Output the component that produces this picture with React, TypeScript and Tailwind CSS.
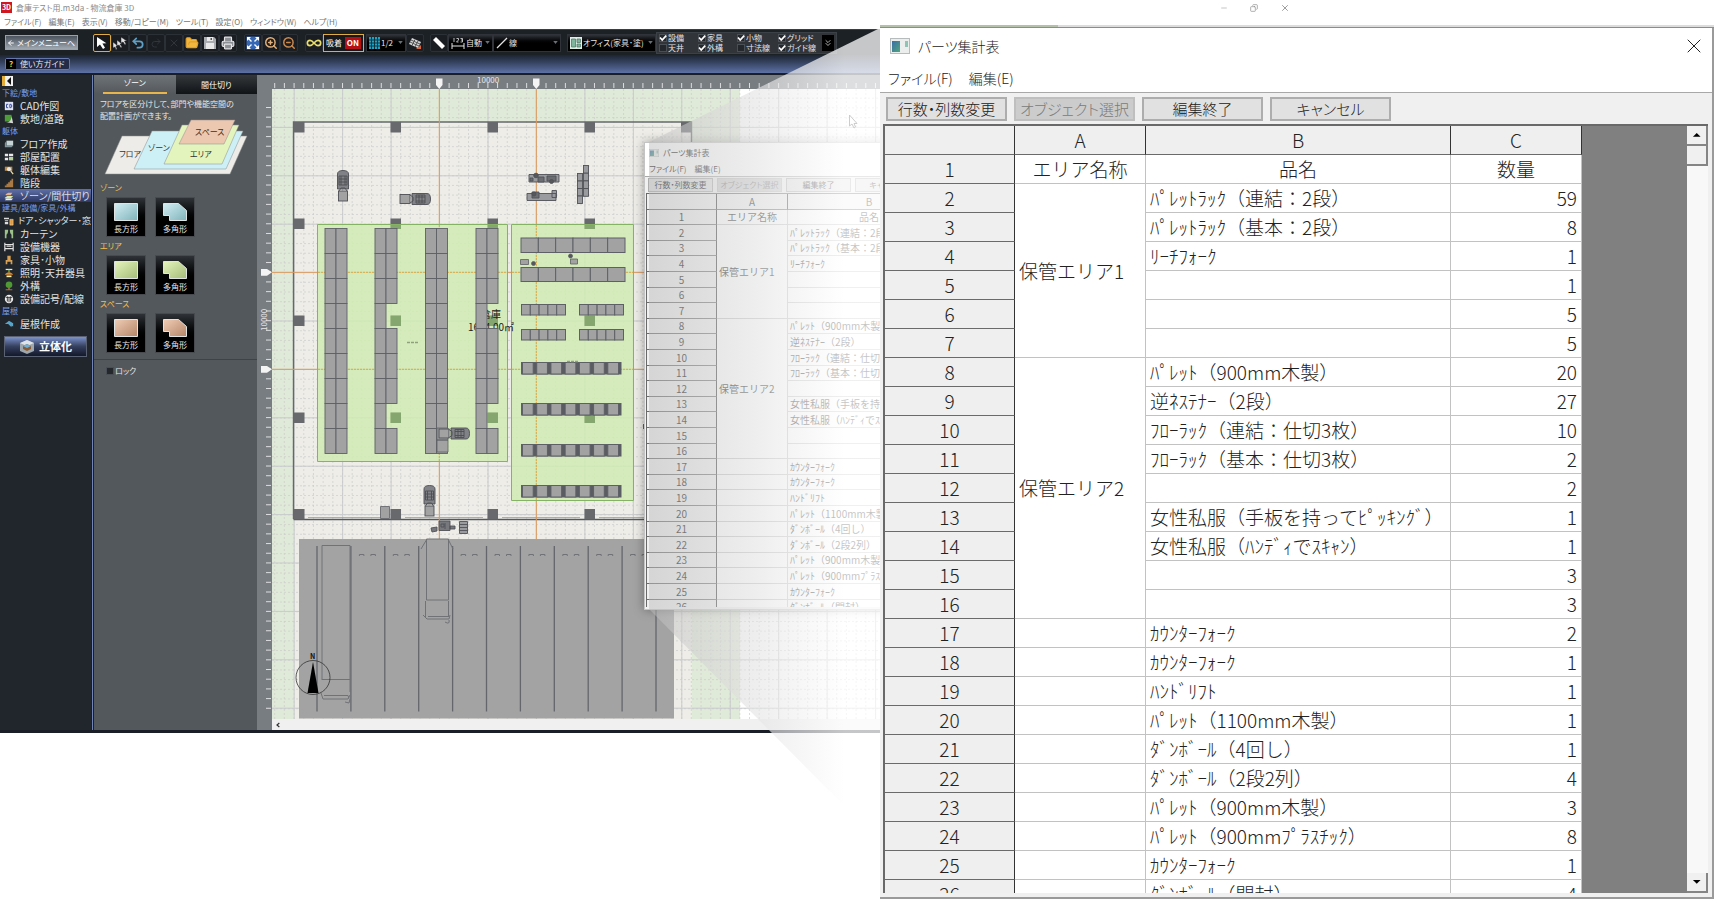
import React from "react";
import {
  ArrowLeft,
  ChevronsDown,
  Copy,
  FolderOpen,
  Infinity as InfinityIcon,
  Minus,
  Printer,
  Redo2,
  Undo2,
  X,
  ZoomIn,
  ZoomOut,
} from "lucide-react";

/* ---------- parts sheet data ---------- */

type Row = { name: string; qty: number };

const ROWS: Row[] = [
  { name: "ﾊﾟﾚｯﾄﾗｯｸ（連結：2段）", qty: 59 },
  { name: "ﾊﾟﾚｯﾄﾗｯｸ（基本：2段）", qty: 8 },
  { name: "ﾘｰﾁﾌｫｰｸ", qty: 1 },
  { name: "", qty: 1 },
  { name: "", qty: 5 },
  { name: "", qty: 5 },
  { name: "ﾊﾟﾚｯﾄ（900mm木製）", qty: 20 },
  { name: "逆ﾈｽﾃﾅｰ（2段）", qty: 27 },
  { name: "ﾌﾛｰﾗｯｸ（連結：仕切3枚）", qty: 10 },
  { name: "ﾌﾛｰﾗｯｸ（基本：仕切3枚）", qty: 2 },
  { name: "", qty: 2 },
  { name: "女性私服（手板を持ってﾋﾟｯｷﾝｸﾞ）", qty: 1 },
  { name: "女性私服（ﾊﾝﾃﾞｨでｽｷｬﾝ）", qty: 1 },
  { name: "", qty: 3 },
  { name: "", qty: 3 },
  { name: "ｶｳﾝﾀｰﾌｫｰｸ", qty: 2 },
  { name: "ｶｳﾝﾀｰﾌｫｰｸ", qty: 1 },
  { name: "ﾊﾝﾄﾞﾘﾌﾄ", qty: 1 },
  { name: "ﾊﾟﾚｯﾄ（1100mm木製）", qty: 1 },
  { name: "ﾀﾞﾝﾎﾞｰﾙ（4回し）", qty: 1 },
  { name: "ﾀﾞﾝﾎﾞｰﾙ（2段2列）", qty: 4 },
  { name: "ﾊﾟﾚｯﾄ（900mm木製）", qty: 3 },
  { name: "ﾊﾟﾚｯﾄ（900mmﾌﾟﾗｽﾁｯｸ）", qty: 8 },
  { name: "ｶｳﾝﾀｰﾌｫｰｸ", qty: 1 },
  { name: "ﾀﾞﾝﾎﾞｰﾙ（開封）", qty: 4 },
];

const AREAS: Record<number, { label: string; span: number }> = {
  0: { label: "保管エリア1", span: 6 },
  6: { label: "保管エリア2", span: 9 },
};

const LARGE = {
  root: "font-light text-[#222]",
  titleBar: "h-9 gap-2 pl-2.5 pr-1.5 text-[14px]",
  icon: "h-4 w-5",
  close: "size-6",
  menuBar: "h-7 gap-4 px-2 text-[14px]",
  toolBar: "h-8 gap-[7px] px-1.5 border-t border-[#a8a8a8]",
  button: "h-6 w-[121px] text-[15px] leading-[20px] border-2",
  frame: "ml-[3px] mr-1 mb-1 border-t-2 border-l-2",
  table: "w-[697px] text-[19px] leading-[24px]",
  rows: ["h-[29px]"],
  cols: ["w-[130px]", "w-[131px]", "w-[305px]", "w-[131px]"],
  pad: "px-1",
  scroll: "w-[21px]",
  scrollBtn: "h-5",
};

const SMALL: typeof LARGE = {
  root: "font-normal text-[#111]",
  titleBar: "h-[19px] gap-1 pl-1 pr-2 text-[8px]",
  icon: "h-2 w-2.5",
  close: "size-3",
  menuBar: "h-3.5 gap-2 px-1 text-[8px]",
  toolBar: "h-[17px] gap-1 px-[3px] border-t border-[#a8a8a8]",
  button: "h-3.5 w-[65px] text-[8px] leading-[12px] border",
  frame: "ml-px mr-0.5 mb-0.5 border-t border-l",
  table: "w-[375px] text-[10px] leading-[14px]",
  rows: ["h-[16px]", "h-[15px]", "h-[16px]", "h-[15px]", "h-[16px]"],
  cols: ["w-[70px]", "w-[71px]", "w-[163px]", "w-[71px]"],
  pad: "px-0.5",
  scroll: "w-[11px]",
  scrollBtn: "h-[11px]",
};

const HEAD_CELL =
  "border-r border-b border-r-[#333] border-b-[#6a6a6a] bg-[#efefef] p-0 text-center [font-weight:inherit]";
const DATA_CELL = "border-r border-b border-[#c2c2c2] bg-white py-0";

function PartsSheet({ size }: { size: typeof LARGE }) {
  const rowHeight = (i: number) => size.rows[i % size.rows.length];
  return (
    <div className={`flex h-full flex-col bg-white ${size.root}`}>
      <div className={`flex shrink-0 items-center [font-feature-settings:'palt'] ${size.titleBar}`}>
        <svg viewBox="0 0 20 16" className={size.icon} aria-hidden="true">
          <defs>
            <linearGradient id="sheetIcon" x1="0" y1="0" x2="1" y2="1">
              <stop offset="0" stopColor="#3a6ea8" />
              <stop offset="1" stopColor="#4fa57c" />
            </linearGradient>
          </defs>
          <rect x="0.5" y="0.5" width="19" height="15" fill="#eceeee" stroke="#b6bcbc" />
          <rect x="2" y="3" width="8" height="11" fill="url(#sheetIcon)" />
          <rect x="15" y="3" width="3" height="6" fill="#8fc4b4" />
        </svg>
        <span className="flex-1">パーツ集計表</span>
        <button type="button" aria-label="閉じる">
          <X className={size.close} strokeWidth={1} />
        </button>
      </div>
      <div className={`flex shrink-0 items-center [font-feature-settings:'palt'] ${size.menuBar}`}>
        <button type="button">ファイル(F)</button>
        <button type="button">編集(E)</button>
      </div>
      <div className={`flex shrink-0 items-center bg-[#f0f0f0] ${size.toolBar}`}>
        {["行数・列数変更", "オブジェクト選択", "編集終了", "キャンセル"].map((label, i) => (
          <button
            key={label}
            type="button"
            disabled={i === 1}
            className={`flex shrink-0 items-center justify-center whitespace-nowrap border-[#adadad] bg-[#e1e1e1] [font-feature-settings:'palt'] disabled:border-[#bfbfbf] disabled:bg-[#cccccc] disabled:text-[#7a7a7a] ${size.button}`}
          >
            {label}
          </button>
        ))}
      </div>
      <div className="flex min-h-0 flex-1 bg-[#f0f0f0]">
        <div className={`flex min-w-0 flex-1 overflow-hidden border-[#696969] ${size.frame}`}>
          <div className="min-w-0 flex-1 overflow-hidden bg-[#808080]">
            <table className={`table-fixed border-separate border-spacing-0 ${size.table}`}>
              <thead>
                <tr className={rowHeight(0)}>
                  {["", "A", "B", "C"].map((c, i) => (
                    <th key={i} scope="col" className={`${HEAD_CELL} ${size.cols[i]}`}>
                      {c}
                    </th>
                  ))}
                </tr>
              </thead>
              <tbody>
                <tr className={rowHeight(1)}>
                  <th scope="row" className={HEAD_CELL}>1</th>
                  <td className={`${DATA_CELL} text-center ${size.pad}`}>エリア名称</td>
                  <td className={`${DATA_CELL} text-center ${size.pad}`}>品名</td>
                  <td className={`${DATA_CELL} text-center ${size.pad}`}>数量</td>
                </tr>
                {ROWS.map((row, i) => {
                  const area = AREAS[i];
                  const covered = i < 15;
                  return (
                    <tr key={i} className={rowHeight(i + 2)}>
                      <th scope="row" className={HEAD_CELL}>{i + 2}</th>
                      {area && (
                        <td rowSpan={area.span} className={`${DATA_CELL} align-middle whitespace-nowrap ${size.pad}`}>
                          {area.label}
                        </td>
                      )}
                      {!covered && <td className={DATA_CELL} />}
                      <td className={`${DATA_CELL} whitespace-nowrap ${size.pad}`}>{row.name}</td>
                      <td className={`${DATA_CELL} text-right ${size.pad}`}>{row.qty}</td>
                    </tr>
                  );
                })}
              </tbody>
            </table>
          </div>
          <div className={`flex shrink-0 flex-col bg-[#f8f8f8] ${size.scroll}`}>
            <ScrollButton size={size.scrollBtn} label="上へ" d="M1 6 5 2l4 4z" />
            <div className={`border-r-2 border-b-2 border-[#858585] bg-[#f0f0f0] ${size.scrollBtn}`} />
            <div className="flex-1" />
            <ScrollButton size={size.scrollBtn} label="下へ" d="M1 2h8L5 6z" />
          </div>
        </div>
      </div>
    </div>
  );
}

function ScrollButton({ size, label, d }: { size: string; label: string; d: string }) {
  return (
    <button
      type="button"
      aria-label={label}
      className={`flex items-center justify-center border-r-2 border-b-2 border-[#858585] bg-[#f0f0f0] ${size}`}
    >
      <svg viewBox="0 0 10 8" className="w-1/2" aria-hidden="true">
        <path d={d} fill="#000" />
      </svg>
    </button>
  );
}

/* ---------- toolbar ---------- */

function Tool({ label, active, children }: { label: string; active?: boolean; children: React.ReactNode }) {
  return (
    <button
      type="button"
      aria-label={label}
      className={
        active
          ? "flex h-[18px] w-[18px] shrink-0 items-center justify-center rounded-xs border border-[#e0ac45] bg-[#17191d]"
          : "flex h-[18px] w-[18px] shrink-0 items-center justify-center rounded-xs border border-[#2b3037] bg-[#1a1d22]"
      }
    >
      {children}
    </button>
  );
}

function Picker({ label, value, width, children }: { label: string; value: string; width: string; children?: React.ReactNode }) {
  return (
    <label
      className={`flex h-[18px] shrink-0 items-center gap-px border border-[#30343a] bg-linear-to-b from-[#30343a] to-black to-60% px-0.5 ${width}`}
    >
      {children}
      <select
        aria-label={label}
        className="min-w-0 flex-1 appearance-none bg-transparent text-[8px] leading-[12px] text-[#e6e6e6] [font-feature-settings:'palt']"
      >
        <option>{value}</option>
      </select>
      <svg viewBox="0 0 6 4" className="h-[3px] w-[5px] shrink-0" aria-hidden="true">
        <path d="M0 0h6L3 4z" fill="#6a7077" />
      </svg>
    </label>
  );
}

function Tick({ label, checked }: { label: string; checked: boolean }) {
  return (
    <label className="flex items-center gap-px text-[8px] leading-[9px] whitespace-nowrap text-[#e4e4e4]">
      <span className="grid shrink-0">
        <input
          type="checkbox"
          defaultChecked={checked}
          className="peer col-start-1 row-start-1 size-2 appearance-none border border-[#4a4f56] bg-[#24282d]"
        />
        <svg
          viewBox="0 0 8 8"
          className="pointer-events-none invisible col-start-1 row-start-1 size-2 peer-checked:visible"
          aria-hidden="true"
        >
          <path d="M1 3.5 3.2 6 7.2 1.6" fill="none" stroke="#fff" strokeWidth="1.7" />
        </svg>
      </span>
      {label}
    </label>
  );
}

const TICKS: [string, boolean][] = [
  ["設備", true],
  ["家具", true],
  ["小物", true],
  ["グリッド", true],
  ["天井", false],
  ["外構", true],
  ["寸法線", false],
  ["ガイド線", true],
];

function Toolbar() {
  return (
    <div className="flex h-[26px] items-center border-t border-[#3a3f45] bg-[#1c2126] pl-[5px] [font-feature-settings:'palt']">
      <button
        type="button"
        className="mr-[15px] flex h-[15px] w-[73px] shrink-0 items-center gap-0.5 border border-[#9aa1a8] bg-linear-to-b from-[#4c555f] to-[#9fa7b0] px-px text-[8px] whitespace-nowrap text-white"
      >
        <ArrowLeft className="size-2 shrink-0" strokeWidth={3} />
        メインメニューへ
      </button>
      <Tool label="選択" active>
        <svg viewBox="0 0 16 16" className="size-4" aria-hidden="true">
          <path d="M3 2v10l3-2.4L9 14l2-1.2-2.6-4.2 4-.4z" fill="#fff" />
        </svg>
      </Tool>
      <Tool label="複数選択">
        <svg viewBox="0 0 16 16" className="size-4" aria-hidden="true">
          <path d="M9 2v6l2-1 2 3 1-1-1.500-3H15zM5 5v6l2-1 2 3 1-1-2-3h2zM1 7v6l2-1 1 3 1-1-1-3h2z" fill="#e4e4e4" stroke="#1a1d22" strokeWidth=".5" />
        </svg>
      </Tool>
      <Tool label="元に戻す"><Undo2 className="size-3.5 text-[#5f9fc4]" strokeWidth={3} /></Tool>
      <Tool label="やり直す"><Redo2 className="size-3 text-[#30363c]" /></Tool>
      <Tool label="削除"><X className="size-3 text-[#30363c]" /></Tool>
      <Tool label="開く"><FolderOpen className="size-3.5 fill-[#f0b63e] text-[#e0a02c]" /></Tool>
      <Tool label="保存">
        <svg viewBox="0 0 12 12" className="size-3" aria-hidden="true">
          <path d="M0 0h10l2 2v10H0z" fill="#a9adb1" />
          <path d="M3 0h6v4H3zM2 6h8v6H2z" fill="#e9e9e9" />
          <path d="M6.500 1h1.500v2H6.500z" fill="#555" />
        </svg>
      </Tool>
      <Tool label="印刷"><Printer className="size-3.5 fill-[#8d9195] text-[#e6e6e6]" /></Tool>
      <span className="w-[7px] shrink-0" />
      <Tool label="全体表示">
        <svg viewBox="0 0 14 14" className="size-3.5" aria-hidden="true">
          <rect x="0.5" y="0.5" width="13" height="13" fill="#3567b5" />
          <path d="M1 1h4L1 5zM13 1v4L9 1zM1 13V9l4 4zM13 13H9l4-4z" fill="#fff" />
          <path d="m2 2 3.500 3.500M12 2 8.500 5.500M2 12l3.500-3.500M12 12 8.500 8.500" stroke="#fff" strokeWidth="1.400" />
        </svg>
      </Tool>
      <Tool label="拡大"><ZoomIn className="size-3.5 text-[#e3b27c]" strokeWidth={2.5} /></Tool>
      <Tool label="縮小"><ZoomOut className="size-3.5 text-[#c98a50]" strokeWidth={2.5} /></Tool>
      <span className="w-[7px] shrink-0" />
      <Tool label="連続"><InfinityIcon className="size-4 text-[#e8dc6a]" strokeWidth={2.5} /></Tool>
      <button
        type="button"
        className="flex h-[18px] w-[41px] shrink-0 items-center justify-between border border-[#e0ac45] bg-[#17191d] px-0.5 text-[8px] leading-none whitespace-nowrap text-white"
      >
        吸着
        <span className="bg-[#b30f14] px-0.5 py-0.5 text-[8px] font-bold">ON</span>
      </button>
      <span className="w-0.5 shrink-0" />
      <Picker label="グリッド" value="1/2" width="w-[40px]">
        <svg viewBox="0 0 11 12" className="h-3 w-[11px] shrink-0" aria-hidden="true">
          <path d="M0 0h11v12H0z" fill="#1fa3c4" />
          <path d="M2.500 0v12M5.500 0v12M8.500 0v12M0 3h11M0 6h11M0 9h11" stroke="#11343f" />
        </svg>
      </Picker>
      <Tool label="グリッド設定">
        <svg viewBox="0 0 14 14" className="size-3.5" aria-hidden="true">
          <path d="m4 2 9 4-3 6-9-4z" fill="#d6d6d6" />
          <path d="m3 4 9 4M2 6l9 4M7 3.500l-3 6M10 5l-3 6" stroke="#555" />
          <path d="M8 13h5V9z" fill="#d9673c" />
        </svg>
      </Tool>
      <span className="w-1.5 shrink-0" />
      <Tool label="定規">
        <svg viewBox="0 0 14 14" className="size-3.5" aria-hidden="true">
          <path d="m1 4 3-3 9 9-3 3z" fill="#fff" />
        </svg>
      </Tool>
      <Picker label="寸法" value="自動" width="w-[45px]">
        <svg viewBox="0 0 14 12" className="h-3 w-3.5 shrink-0" aria-hidden="true">
          <path d="M1 6v6M13 6v6M1 9h12" stroke="#e4e4e4" fill="none" />
          <path d="M3 1v4M5.500 1.500h2v1.500l-2 2h2M9.500 1.500h2v3.500h-2M10 3h1.500" stroke="#e4e4e4" fill="none" strokeWidth=".8" />
        </svg>
      </Picker>
      <Picker label="線種" value="線" width="w-[68px]">
        <svg viewBox="0 0 12 12" className="size-3 shrink-0" aria-hidden="true">
          <path d="M1 11 11 1" stroke="#e4e4e4" strokeWidth="1.200" />
        </svg>
      </Picker>
      <span className="w-1.5 shrink-0" />
      <Picker label="表示設定" value="オフィス(家具･塗)" width="w-[89px]">
        <svg viewBox="0 0 12 12" className="size-3 shrink-0" aria-hidden="true">
          <path d="M0 0h12v12H0z" fill="#dfeee6" />
          <path d="M1.500 2h4v8h-4zM7 2h3.500v3.500H7zM7 7h3.500v3H7z" fill="#7fb59c" stroke="#4b6f63" strokeWidth=".7" />
        </svg>
      </Picker>
      <div className="flex h-[22px] shrink-0 items-center gap-1 border border-[#3c4147] bg-[#31353a] px-0.5">
        <div className="grid grid-cols-[39px_39px_41px_40px] gap-y-px">
          {TICKS.map(([label, checked]) => (
            <Tick key={label} label={label} checked={checked} />
          ))}
        </div>
        <button type="button" aria-label="その他" className="flex h-4 w-3 items-center justify-center bg-black text-[#d0d0d0]">
          <ChevronsDown className="size-2.5" />
        </button>
      </div>
    </div>
  );
}

/* ---------- side navigation ---------- */

type NavItem = { label: string; icon?: React.ReactNode; active?: boolean; long?: boolean };

const NAV: NavItem[] = [
  { label: "下絵/敷地" },
  { label: "CAD作図", icon: <><path d="M1 1h10v10H1z" fill="#dfe3f2" /><path d="M5 4H3v4h2M7 4v4h1.500c1 0 1-4 0-4z" stroke="#3c4fa0" fill="none" strokeWidth="1.200" /></> },
  { label: "敷地/道路", icon: <><path d="M1 1h8v8H1z" fill="#4e9b3a" /><path d="M9 2l2 9-9-1c5 0 7-3 7-8z" fill="#d5d5d5" /></> },
  { label: "躯体" },
  { label: "フロア作成", icon: <><path d="M3 2h8v6H3z" fill="#c5d2d6" /><path d="m3 2-2 3v5h8l2-2H3z" fill="#82959c" /></> },
  { label: "部屋配置", icon: <><path d="M1 2h4v3H1zM1 7h4v3H1zM6 2h5v3H6z" fill="#e9e9e9" /><path d="M6 6h5v4H6z" fill="#b8d49a" /></> },
  { label: "躯体編集", icon: <><path d="M1 2h9v5H1z" fill="#b88b4c" /><circle cx="6" cy="5" r="2.500" fill="#e4e4e4" /><path d="m8 7 3 4" stroke="#f0dca0" strokeWidth="1.500" /></> },
  { label: "階段", icon: <path d="M1 11V9h2V7h2V5h2V3h2V1h2v10z" fill="#a97a45" /> },
  { label: "ゾーン/間仕切り", active: true, icon: <><path d="m1 8 3-2h7l-3 3H1z" fill="#d6e9a8" /><path d="m1 11 2-2h8l-2 2z" fill="#f0eee8" /><path d="m2 4 3-2h5L8 5H2z" fill="#e3b093" /></> },
  { label: "建具/設備/家具/外構" },
  { label: "ドア･シャッター･窓", long: true, icon: <><path d="M0 2h6v2H0zM1 5h4v1H1zM1 7h4v3H1z" fill="#dcdcdc" /><path d="M7 4h4v7H7z" fill="#e39a3a" stroke="#fff" strokeWidth=".5" /></> },
  { label: "カーテン", icon: <path d="M1 1h4c0 4-1 5-2 6v4H1zM11 1H7c0 4 1 5 2 6v4h2z" fill="#9cc28a" /> },
  { label: "設備機器", icon: <path d="M1 1v10M11 1v10M1 3h10M1 8h10M3 5h6" stroke="#e4e4e4" strokeWidth="1.400" /> },
  { label: "家具･小物", icon: <path d="M4 1h4v5h2v5H8V8H4v3H2V6h2z" fill="#d7a055" /> },
  { label: "照明･天井器具", icon: <><path d="M2 1h8v1.500H2z" fill="#e6e6e6" /><path d="M5 2h2v3H5z" fill="#5a9a45" /><path d="M1 8c2-4 8-4 10 0z" fill="#e08b2a" /><path d="M3 9h6v2H3z" fill="#fff2b0" /></> },
  { label: "外構", icon: <><circle cx="6" cy="4.500" r="4" fill="#4f9a35" /><path d="M5 8h2v3H5zM2 10h8v1H2z" fill="#a2713d" /></> },
  { label: "設備記号/配線", icon: <><circle cx="6" cy="6" r="5" fill="#f0f0f0" /><path d="M4 3v6M6 4v6M8 3v6M2 4h8" stroke="#222" /></> },
  { label: "屋根" },
  { label: "屋根作成", icon: <path d="m1 6 5-4 5 3v4L9 8v2L5 6z" fill="#56a5cc" /> },
];

function SideNav() {
  return (
    <nav className="flex w-[91px] shrink-0 flex-col bg-[#20262b]">
      <button type="button" aria-label="パネルを閉じる" className="mt-px mb-px ml-0.5 flex h-2.5 w-[11px] bg-white">
        <svg viewBox="0 0 11 10" aria-hidden="true">
          <path d="M0 0h11v10H0z" fill="#f2f2f2" />
          <path d="M0 0h3v10H0z" fill="#e5ad3c" />
          <path d="M9 1v8L5 5z" fill="#111" />
        </svg>
      </button>
      <ul className="flex flex-col [font-feature-settings:'palt']">
        {NAV.map((item) =>
          item.icon ? (
            <li key={item.label}>
              <a
                href="#"
                className={`flex h-[13px] items-center pl-1 leading-none whitespace-nowrap ${
                  item.long ? "gap-1 text-[9px]" : "gap-1.5 text-[10px]"
                } ${item.active ? "bg-linear-to-b from-[#6070a8] to-[#2c3866] text-[#dcdcdc]" : "text-[#e2e2e2]"}`}
              >
                <svg viewBox="0 0 12 12" className="size-2.5 shrink-0" fill="none" aria-hidden="true">
                  {item.icon}
                </svg>
                {item.label}
              </a>
            </li>
          ) : (
            <li key={item.label} className="flex h-3 items-center pl-0.5 text-[8px] leading-none whitespace-nowrap text-[#7d9fe8]">
              {item.label}
            </li>
          )
        )}
      </ul>
      <button
        type="button"
        className="mx-1 mt-1.5 flex h-[21px] items-center justify-center gap-1 border border-[#596173] bg-linear-to-b from-[#7c93cc] via-[#35405f] to-[#14192a] text-[11px] leading-none font-bold text-white"
      >
        <svg viewBox="0 0 16 16" className="size-4" aria-hidden="true">
          <path d="m8 1 7 3v8l-7 3-7-3V4z" fill="#9fa7ae" />
          <path d="m8 1 7 3-7 3-7-3z" fill="#dfe4e8" />
          <path d="m4 7 4-2 4 2v3l-4 2-4-2z" fill="#8a5a35" />
          <path d="m4 7 4-2 4 2-4 2z" fill="#6fb0d6" />
        </svg>
        立体化
      </button>
    </nav>
  );
}

/* ---------- zone panel ---------- */

const ZONES = [
  { label: "ゾーン", from: "#d3eef3", to: "#7fb3bb" },
  { label: "エリア", from: "#e6f5bd", to: "#a3bb78" },
  { label: "スペース", from: "#f0cdb6", to: "#b58567" },
];

function ZoneShape({ name, kind }: { name: string; kind: "rect" | "poly" }) {
  const zone = ZONES.find((z) => z.label === name)!;
  const id = `${kind}${zone.from.slice(1)}`;
  return (
    <svg viewBox="0 0 26 20" className="h-5 w-[26px]" aria-hidden="true">
      <defs>
        <linearGradient id={id} x1="0" y1="0" x2="1" y2="1">
          <stop offset="0" stopColor={zone.from} />
          <stop offset="1" stopColor={zone.to} />
        </linearGradient>
      </defs>
      <path
        d={kind === "rect" ? "M1.500 1.500h23v17h-23z" : "M1.500 1.500h15l8 7v10h-17v-5h-6z"}
        fill={`url(#${id})`}
        stroke="#dfe3e3"
      />
    </svg>
  );
}

function ZonePanel() {
  return (
    <section className="flex w-[163px] shrink-0 flex-col bg-[#53585c] [font-feature-settings:'palt']">
      <div className="flex h-[19px] text-[8px] leading-none">
        <button type="button" className="flex flex-1 flex-col items-center justify-between bg-linear-to-b from-[#6f7377] to-[#53585c] pt-1 text-white">
          ゾーン
          <span className="h-0.5 w-16 bg-[#e7b54c]" />
        </button>
        <button type="button" className="flex-1 bg-linear-to-b from-[#34383c] to-[#111417] text-white">
          間仕切り
        </button>
      </div>
      <p className="h-6 pt-1 pl-1.5 text-[8px] leading-[12px] whitespace-nowrap text-[#e6e6e6]">
        フロアを区分けして、部門や機能空間の
        <br />
        配置計画ができます。
      </p>
      <svg viewBox="100 118 150 60" className="ml-1.5 h-[60px] w-[150px]" aria-hidden="true">
        <g stroke="#8a8d8c" strokeWidth=".5">
          <path d="M122 136h125l-17 38H105z" fill="#eeece8" />
          <path d="M152 131h91l-17 38h-92z" fill="#cdeff6" />
          <path d="M182 125h57l-17 39h-58z" fill="#e4f4bd" />
          <path d="M191 120h44l-11 24h-45z" fill="#edc8b1" />
        </g>
        <g fontSize="8" fill="#333">
          <text x="119" y="157">フロア</text>
          <text x="148" y="151">ゾーン</text>
          <text x="190" y="157">エリア</text>
          <text x="195" y="135">スペース</text>
        </g>
      </svg>
      <div className="flex flex-col gap-px pt-0.5 pl-1.5">
        {ZONES.map((zone) => (
          <div key={zone.label} className="flex flex-col gap-px">
            <h3 className="flex h-4 items-center text-[8px] leading-none text-[#efc04e]">{zone.label}</h3>
            <div className="flex gap-[9px] pl-1.5">
              {(["rect", "poly"] as const).map((kind) => (
                <button
                  key={kind}
                  type="button"
                  className="flex size-10 flex-col items-center justify-between border border-[#474b50] bg-linear-to-b from-[#2f3337] to-black to-70% pt-1 pb-0.5 text-[8px] leading-[10px] text-[#e8e8e8]"
                >
                  <ZoneShape name={zone.label} kind={kind} />
                  {kind === "rect" ? "長方形" : "多角形"}
                </button>
              ))}
            </div>
          </div>
        ))}
      </div>
      <div className="mt-1.5 border-t border-[#3f4347] pt-1.5 pl-3">
        <Tick label="ロック" checked={false} />
      </div>
    </section>
  );
}

/* ---------- floor plan ---------- */

const range = (n: number) => Array.from({ length: n }, (_, i) => i);
const STEP = 9.69;

function Rack({ x, gaps }: { x: number; gaps?: number[] }) {
  return (
    <g fill="#a2a2a2" stroke="#5d6066" strokeWidth="0.9">
      {range(9).map((i) => (
        <g key={i}>
          <rect x={x} y={228.500 + i * 25} width="11" height="25" />
          {!gaps?.includes(i) && <rect x={x + 11} y={228.500 + i * 25} width="11" height="25" />}
        </g>
      ))}
    </g>
  );
}

function Shelf({ x, y, w, h, n, dark }: { x: number; y: number; w: number; h: number; n: number; dark?: boolean }) {
  const cell = w / n;
  return (
    <g fill="#a2a2a2" stroke="#5d6066" strokeWidth="1">
      {dark && <rect x={x} y={y} width={w} height={h} fill="#5a5c62" />}
      {range(n).map((i) => (
        <rect key={i} x={x + i * cell + (dark ? 1 : 0)} y={y} width={dark ? cell - 3.500 : cell} height={h} />
      ))}
    </g>
  );
}

function Forklift({ at, rotate = 0 }: { at: [number, number]; rotate?: number }) {
  return (
    <g transform={`translate(${at[0]} ${at[1]}) rotate(${rotate})`} stroke="#4c4e54" strokeWidth=".9">
      <rect x="-4.500" y="5" width="9" height="10" fill="#a2a2a2" />
      <path d="M-5.500-12q0-3.500 5.500-3.500t5.500 3.500V3h-11z" fill="#808287" />
      <path d="M-4-10h8v9h-8zM-4-7h8M-4-4h8M-2-10v9M2-10v9M-4 5l2-3h4l2 3" fill="none" />
    </g>
  );
}

function FloorPlan() {
  return (
    <div className="flex min-w-0 flex-1 flex-col bg-[#787d82]">
      <svg viewBox="257 75 1040 644" preserveAspectRatio="xMinYMin slice" className="h-[644px] w-full" role="img" aria-label="倉庫平面図">
        <rect x="257" y="75" width="1040" height="644" fill="#787d82" />
        <rect x="272" y="89" width="1030" height="630" fill="#fff" />
        <rect x="272" y="89" width="468" height="630" fill="#e0ead8" />
        <path d="M294 122h398v597H294z" fill="#eeede8" />

        <g stroke="#cbcdcb" strokeWidth=".7" strokeDasharray="2 2">
          {range(66).map((i) => (
            <path key={`v${i}`} d={`M${274.700 + i * STEP} 89V719`} />
          ))}
          {range(64).map((i) => (
            <path key={`h${i}`} d={`M272 ${98.200 + i * STEP}H900`} />
          ))}
        </g>
        <g stroke="#c9cacd" strokeWidth="1">
          {range(13).map((i) => (
            <path key={`V${i}`} d={`M${294.200 + i * 48.450} 89V719`} />
          ))}
          {range(13).map((i) => (
            <path key={`H${i}`} d={`M272 ${127.400 + i * 48.400}H900`} />
          ))}
        </g>

        <g stroke="#dcdee0" strokeWidth="1">
          {range(64).map((i) => (
            <path key={`t${i}`} d={`M${274.700 + i * STEP} 83V88`} />
          ))}
          {range(63).map((i) => (
            <path key={`l${i}`} d={`M266 ${107.500 + i * STEP}H271`} />
          ))}
        </g>
        <text x="477" y="83" fontSize="8" fill="#e8e8e8">10000</text>
        <text transform="translate(267 331) rotate(-90)" fontSize="8" fill="#e8e8e8">10000</text>

        {/* outer wall */}
        <path d="M293.500 519V122H691.500V519" fill="none" stroke="#65686b" strokeWidth="1.400" />
        <path d="M293.500 519.500H691.500" stroke="#55585c" strokeWidth="1.400" />
        <path d="M308 517.500h78M405 517.500h78M502 517.500h78M599 517.500h78" stroke="#9a9c9d" strokeWidth=".8" />
        {[294, 390.500, 487.500, 584.500, 681].map((x) =>
          [122, 218.500, 315.500, 412.500, 509].map((y) => (
            <rect key={`${x}-${y}`} x={x} y={y} width="10.500" height="10.500" fill="#67696c" />
          ))
        )}

        {/* guide lines */}
        <path d="M439.300 89V539M536.300 89V539M272 272.300H880M272 369.300H880" stroke="#de9a5a" strokeWidth="1" />

        {/* storage areas */}
        <g fill="#cfebb2" fillOpacity=".84" stroke="#86b266" strokeWidth="1">
          <path d="M317.500 224.500h190v237h-190zM511.500 224.500h122v276h-122z" />
        </g>
        <path d="M439.300 225V461M536.300 225V500M318 272.300H507M512 272.300H633M318 369.300H507M512 369.300H633" stroke="#d9a94a" strokeWidth="1" strokeDasharray="2 1" />
        <g fill="#86a670">
          {[390.500, 487.500, 584.500].map((x) => (
            <g key={x}>
              <rect x={x} y="225" width="10.500" height="4" />
              <rect x={x} y="315.500" width="10.500" height="10.500" />
              <rect x={x} y="412.500" width="10.500" height="10.500" />
            </g>
          ))}
        </g>

        <Rack x={325} />
        <Rack x={375} gaps={[3, 7]} />
        <Rack x={425.500} />
        <g fontSize="10" fill="#222">
          <text x="481" y="318">倉庫</text>
          <text x="468" y="331">1624.00㎡</text>
        </g>
        <Rack x={476} gaps={[3, 7]} />
        <Shelf x={521} y={238} w={104} h={14.500} n={6} />
        <Shelf x={521} y={267.500} w={104} h={14} n={6} />
        {[304.500, 329.500].map((y) => (
          <g key={y}>
            <Shelf x={521.500} y={y} w={44} h={10.500} n={5} />
            <Shelf x={579.500} y={y} w={44} h={10.500} n={5} />
          </g>
        ))}
        {[362.500, 403.500, 444.500, 485.500].map((y) => (
          <Shelf key={y} x={521.500} y={y} w={99.500} h={11.500} n={7} dark />
        ))}
        <g fill="#a2a2a2" stroke="#5d6066" strokeWidth=".8">
          <path d="M520.500 259.500h8v5h-8zM570.500 259h7v5h-7z" />
          <circle cx="533.500" cy="263.500" r="2" fill="#55575c" />
          <circle cx="570.500" cy="256" r="2" fill="#55575c" />
          <path d="M437 428h11v12h-11zM437 440h11v12h-11z" />
          <path d="M380.500 506.500h9v12h-9z" />
        </g>
        <path d="M407 342.500h12M567 361.500h11" stroke="#8fa07f" strokeWidth="1.300" strokeDasharray="3 1" />

        <Forklift at={[343, 186]} />
        <Forklift at={[415, 199]} rotate={90} />
        <Forklift at={[454, 433.500]} rotate={90} />
        <Forklift at={[429.500, 501]} />

        {/* packing tables */}
        <g fill="#999b9e" stroke="#4f5157" strokeWidth=".9">
          <path d="M529 174.500h30v7.500h-30zM527 193.500h29v7h-29zM552 190.500h4.500v7H552z" />
          <path d="M530 178h3v3h-3zM538 177h6v5h-6zM547 176h9v5h-9zM532 192h7v6h-7z" fill="#6b6d72" />
          <circle cx="536" cy="175.500" r="2.300" fill="#55575c" />
          <circle cx="551.500" cy="181.500" r="2" fill="#55575c" />
          <circle cx="534" cy="194" r="2" fill="#55575c" />
          {range(4).map((i) => (
            <rect key={i} x="583.500" y={165.500 + i * 7.700} width="5" height="7.700" />
          ))}
          {range(4).map((i) => (
            <rect key={i} x="577.500" y={173.500 + i * 7.500} width="5" height="7.500" />
          ))}
          <path d="M439 521h11v9.500h-11zM450 526h5v3h-5zM431 528l6-1v4l-5 1z" fill="#76787d" />
          <path d="M441 524h3v3h-3zM445 523v6" fill="none" />
          <path d="M459.500 521.500h8v12h-8zM459.500 524.500h8M459.500 527.500h8M459.500 530.500h8" />
          <path d="M643.500 424v5" />
        </g>

        {/* truck yard */}
        <path d="M299 539h375v179.500H299z" fill="#a3a3a3" />
        <g stroke="#63666c" strokeWidth="1.300" fill="none">
          {range(11).map((i) => (
            <path key={i} d={`M${317 + i * 33.900} 546V711.500`} />
          ))}
        </g>
        <g stroke="#707276" strokeWidth="1" fill="none">
          {[1, 2, 4, 5, 6, 7, 8, 9].map((i) => (
            <path key={i} d={`M${325.500 + i * 33.900} 556v-1.500h4.500v1.500M${337 + i * 33.900} 556v-1.500h4.500v1.500`} />
          ))}
          <path d="M322 680V545.500h28v134.500M322 679.500h28M321 693l2 6h25l2-4M324 695.500h24l1 3M350 680v12M345 702l4 1 1-4" />
          <path d="M426.500 600V539h22v61zM421 549l6-10M453 549l-5-10M425.500 601v16M448.500 601v16M423 615l4 4h22l1-4M428 616.500h20M445 622q5 3 4-2" />
        </g>
        <circle cx="313" cy="677.500" r="17" fill="none" stroke="#333" strokeWidth=".8" />
        <path d="m313 662 5.500 31h-11z" fill="#000" />
        <text x="310" y="659" fontSize="7" fontWeight="700" fill="#111">N</text>

        {/* guide handles */}
        <g fill="#f4f4f4">
          <path d="M436 78.500h6.500V85l-3.200 4-3.300-4zM533 78.500h6.500V85l-3.200 4-3.300-4z" />
          <path d="M261 269h6l5 3.300-5 3.400h-6zM261 366h6l5 3.300-5 3.400h-6z" />
        </g>
        <path d="M849.500 115v11l2.500-2 2 4 1.500-1-1.500-3.500h3z" fill="#fff" stroke="#222" strokeWidth=".9" />
      </svg>
      <div className="ml-[15px] flex h-[11px] items-center bg-[#f0f0f0] pl-1">
        <button type="button" aria-label="左へ" className="text-[#333]">
          <svg viewBox="0 0 6 8" className="h-1.5 w-1" aria-hidden="true">
            <path d="M5 1 1.500 4 5 7" fill="none" stroke="currentColor" strokeWidth="1.800" />
          </svg>
        </button>
      </div>
    </div>
  );
}

/* ---------- page ---------- */

const MENUS = ["ファイル(F)", "編集(E)", "表示(V)", "移動/コピー(M)", "ツール(T)", "設定(O)", "ウィンドウ(W)", "ヘルプ(H)"];

export default function App() {
  return (
    <main className="relative min-h-screen overflow-hidden bg-white font-['Noto_Sans_CJK_JP','Noto_Sans',sans-serif]">
      <div className="w-3/4">
        <header className="flex h-[15px] items-center pr-1.5 text-[8px] leading-none text-[#8a8a8a]">
          <span className="ml-px flex size-[11px] items-center justify-center bg-[#d01820] text-[7px] font-bold text-white">3D</span>
          <h1 className="ml-1 flex-1 [font-feature-settings:'palt']">倉庫テスト用.m3da - 物流倉庫 3D</h1>
          <div className="flex gap-[22px]">
            <button type="button" aria-label="最小化"><Minus className="size-2" strokeWidth={1.5} /></button>
            <button type="button" aria-label="元のサイズ"><Copy className="size-2 -scale-x-100" strokeWidth={2} /></button>
            <button type="button" aria-label="閉じる"><X className="size-2.5" strokeWidth={2} /></button>
          </div>
        </header>
        <div className="flex h-3.5 items-center gap-[7px] pl-1 text-[8px] leading-none text-[#777] [font-feature-settings:'palt']">
          {MENUS.map((m) => (
            <button key={m} type="button">{m}</button>
          ))}
        </div>
        <Toolbar />
        <div className="flex h-[18px] items-center bg-linear-to-b from-[#1d2533] to-[#5d72a6] pl-[5px]">
          <button
            type="button"
            className="flex h-3 items-center gap-1 rounded-xs border border-[#6577ab] bg-[#222b47] pr-1 text-[8px] leading-none text-[#e8e8e8] [font-feature-settings:'palt']"
          >
            <span className="flex h-2.5 w-2.5 items-center justify-center bg-black font-bold text-[#f2c63c]">?</span>
            使い方ガイド
          </button>
        </div>
        <div className="flex border-t-2 border-b-3 border-[#1a1e26]">
          <SideNav />
          <div className="w-[3px] shrink-0 border-r border-l border-[#1a1e26] bg-[#7084b8]" />
          <ZonePanel />
          <FloorPlan />
        </div>
      </div>

      <div className="absolute top-[142px] left-[644px] h-[468px] w-[448px] border border-[#c4c4c4] shadow-[0_0_10px_rgba(0,0,0,0.35)]">
        <PartsSheet size={SMALL} />
      </div>

      <div className="absolute top-[28px] left-[644px] h-[820px] w-[236px] bg-linear-to-r from-[rgba(186,186,186,0.5)] from-0% via-[rgba(226,226,226,0.62)] via-45% to-[rgba(255,255,255,0.75)] to-85% [clip-path:polygon(236px_0,5px_114px,5px_581px,236px_814px)]" />

      <div className="absolute top-[25px] right-3.5 left-[880px] flex h-[874px] flex-col">
        <div className="flex h-[3px] shrink-0 border-b border-[#8c8c8c]">
          <div className="w-[178px] bg-[#b5c0a8]" />
          <div className="flex-1 bg-[#dcdcdc]" />
        </div>
        <div className="min-h-0 flex-1 border-r-2 border-b-2 border-[#9a9a9a]">
          <PartsSheet size={LARGE} />
        </div>
      </div>
    </main>
  );
}
